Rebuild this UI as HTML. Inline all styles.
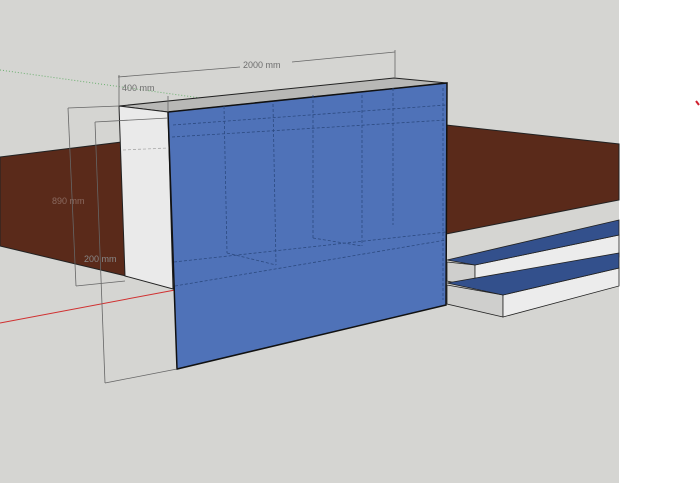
<!DOCTYPE html>
<html><head><meta charset="utf-8"><style>
html,body{margin:0;padding:0;width:700px;height:483px;overflow:hidden;background:#fff}
svg{display:block}
text{font-family:"Liberation Sans",sans-serif;font-size:9px;fill:#6e6e6e}
</style></head><body>
<svg width="700" height="483" viewBox="0 0 700 483">
<rect x="0" y="0" width="619" height="483" fill="#d5d5d2"/>
<rect x="619" y="0" width="81" height="483" fill="#ffffff"/>
<line x1="696" y1="101" x2="699" y2="105" stroke="#d02030" stroke-width="2"/>
<!-- green axis -->
<line x1="0" y1="70" x2="215" y2="100" stroke="#6cb070" stroke-width="1" stroke-dasharray="1,2"/>
<!-- brown ground -->
<polygon points="0,157 122,142 126,276 0,246" fill="#5a2a1a" stroke="#222" stroke-width="1"/>
<polygon points="446,125 619,144 619,200 446,234" fill="#5a2a1a" stroke="#222" stroke-width="1"/>
<!-- red axis -->
<line x1="0" y1="323" x2="175" y2="290" stroke="#d03030" stroke-width="1"/>
<!-- white box -->
<polygon points="119,106 394,78 447,83 168,112" fill="#b8b8b6" stroke="#222" stroke-width="1"/>
<polygon points="119,106 168,112 173,289 125,276" fill="#eaeaea" stroke="#222" stroke-width="1"/>
<line x1="123" y1="150" x2="168" y2="148" stroke="#aaa" stroke-dasharray="3,2" stroke-width="0.8"/>
<!-- blue face -->
<polygon points="168,112 447,83 446,305 177,369" fill="#4f72b8" stroke="#111" stroke-width="1.5"/>
<g stroke="#2c4a80" stroke-width="0.8" stroke-dasharray="3,2" fill="none">
<line x1="172" y1="137" x2="446" y2="120"/>
<line x1="173" y1="125" x2="446" y2="105"/>
<line x1="174" y1="262" x2="446" y2="232"/>
<line x1="175" y1="286" x2="446" y2="240"/>
<line x1="224" y1="106" x2="227" y2="253"/>
<line x1="273" y1="104" x2="276" y2="265"/>
<line x1="313" y1="95" x2="313" y2="238"/>
<line x1="362" y1="95" x2="362" y2="246"/>
<line x1="393" y1="88" x2="393" y2="225"/>
<line x1="227" y1="253" x2="276" y2="265"/>
<line x1="313" y1="238" x2="362" y2="246"/>
<line x1="443" y1="88" x2="443" y2="300"/>
</g>
<!-- steps -->
<polygon points="447,262 475,265 475,287 447,281" fill="#cfcfcd" stroke="#222" stroke-width="0.8"/>
<polygon points="475,265 619,235 619,257 475,287" fill="#ececec" stroke="#222" stroke-width="0.8"/>
<polygon points="447,260 619,220 619,235 475,265" fill="#33508c" stroke="#222" stroke-width="0.8"/>
<polygon points="447,285 503,295 503,317 447,304" fill="#cfcfcd" stroke="#222" stroke-width="0.8"/>
<polygon points="503,295 619,268 619,286 503,317" fill="#ececec" stroke="#222" stroke-width="0.8"/>
<polygon points="447,283 619,253 619,268 503,295" fill="#33508c" stroke="#222" stroke-width="0.8"/>
<!-- dimensions -->
<g stroke="#666" stroke-width="0.8" fill="none">
<line x1="118" y1="77" x2="240" y2="67"/>
<line x1="292" y1="62" x2="395" y2="52"/>
<line x1="119" y1="75" x2="119" y2="106"/>
<line x1="395" y1="50" x2="395" y2="78"/>
<line x1="68" y1="108" x2="119" y2="106"/>
<line x1="68" y1="108" x2="76" y2="286"/>
<line x1="76" y1="286" x2="125" y2="281"/>
<line x1="95" y1="122" x2="168" y2="118"/>
<line x1="95" y1="122" x2="105" y2="383"/>
<line x1="105" y1="383" x2="177" y2="369"/>
<line x1="168" y1="96" x2="168" y2="112"/>
</g>
<text x="243" y="68">2000 mm</text>
<text x="122" y="91">400 mm</text>
<text x="52" y="204" style="fill:#8a6a60">890 mm</text>
<text x="84" y="262" style="fill:#888">200 mm</text>
</svg>
</body></html>
